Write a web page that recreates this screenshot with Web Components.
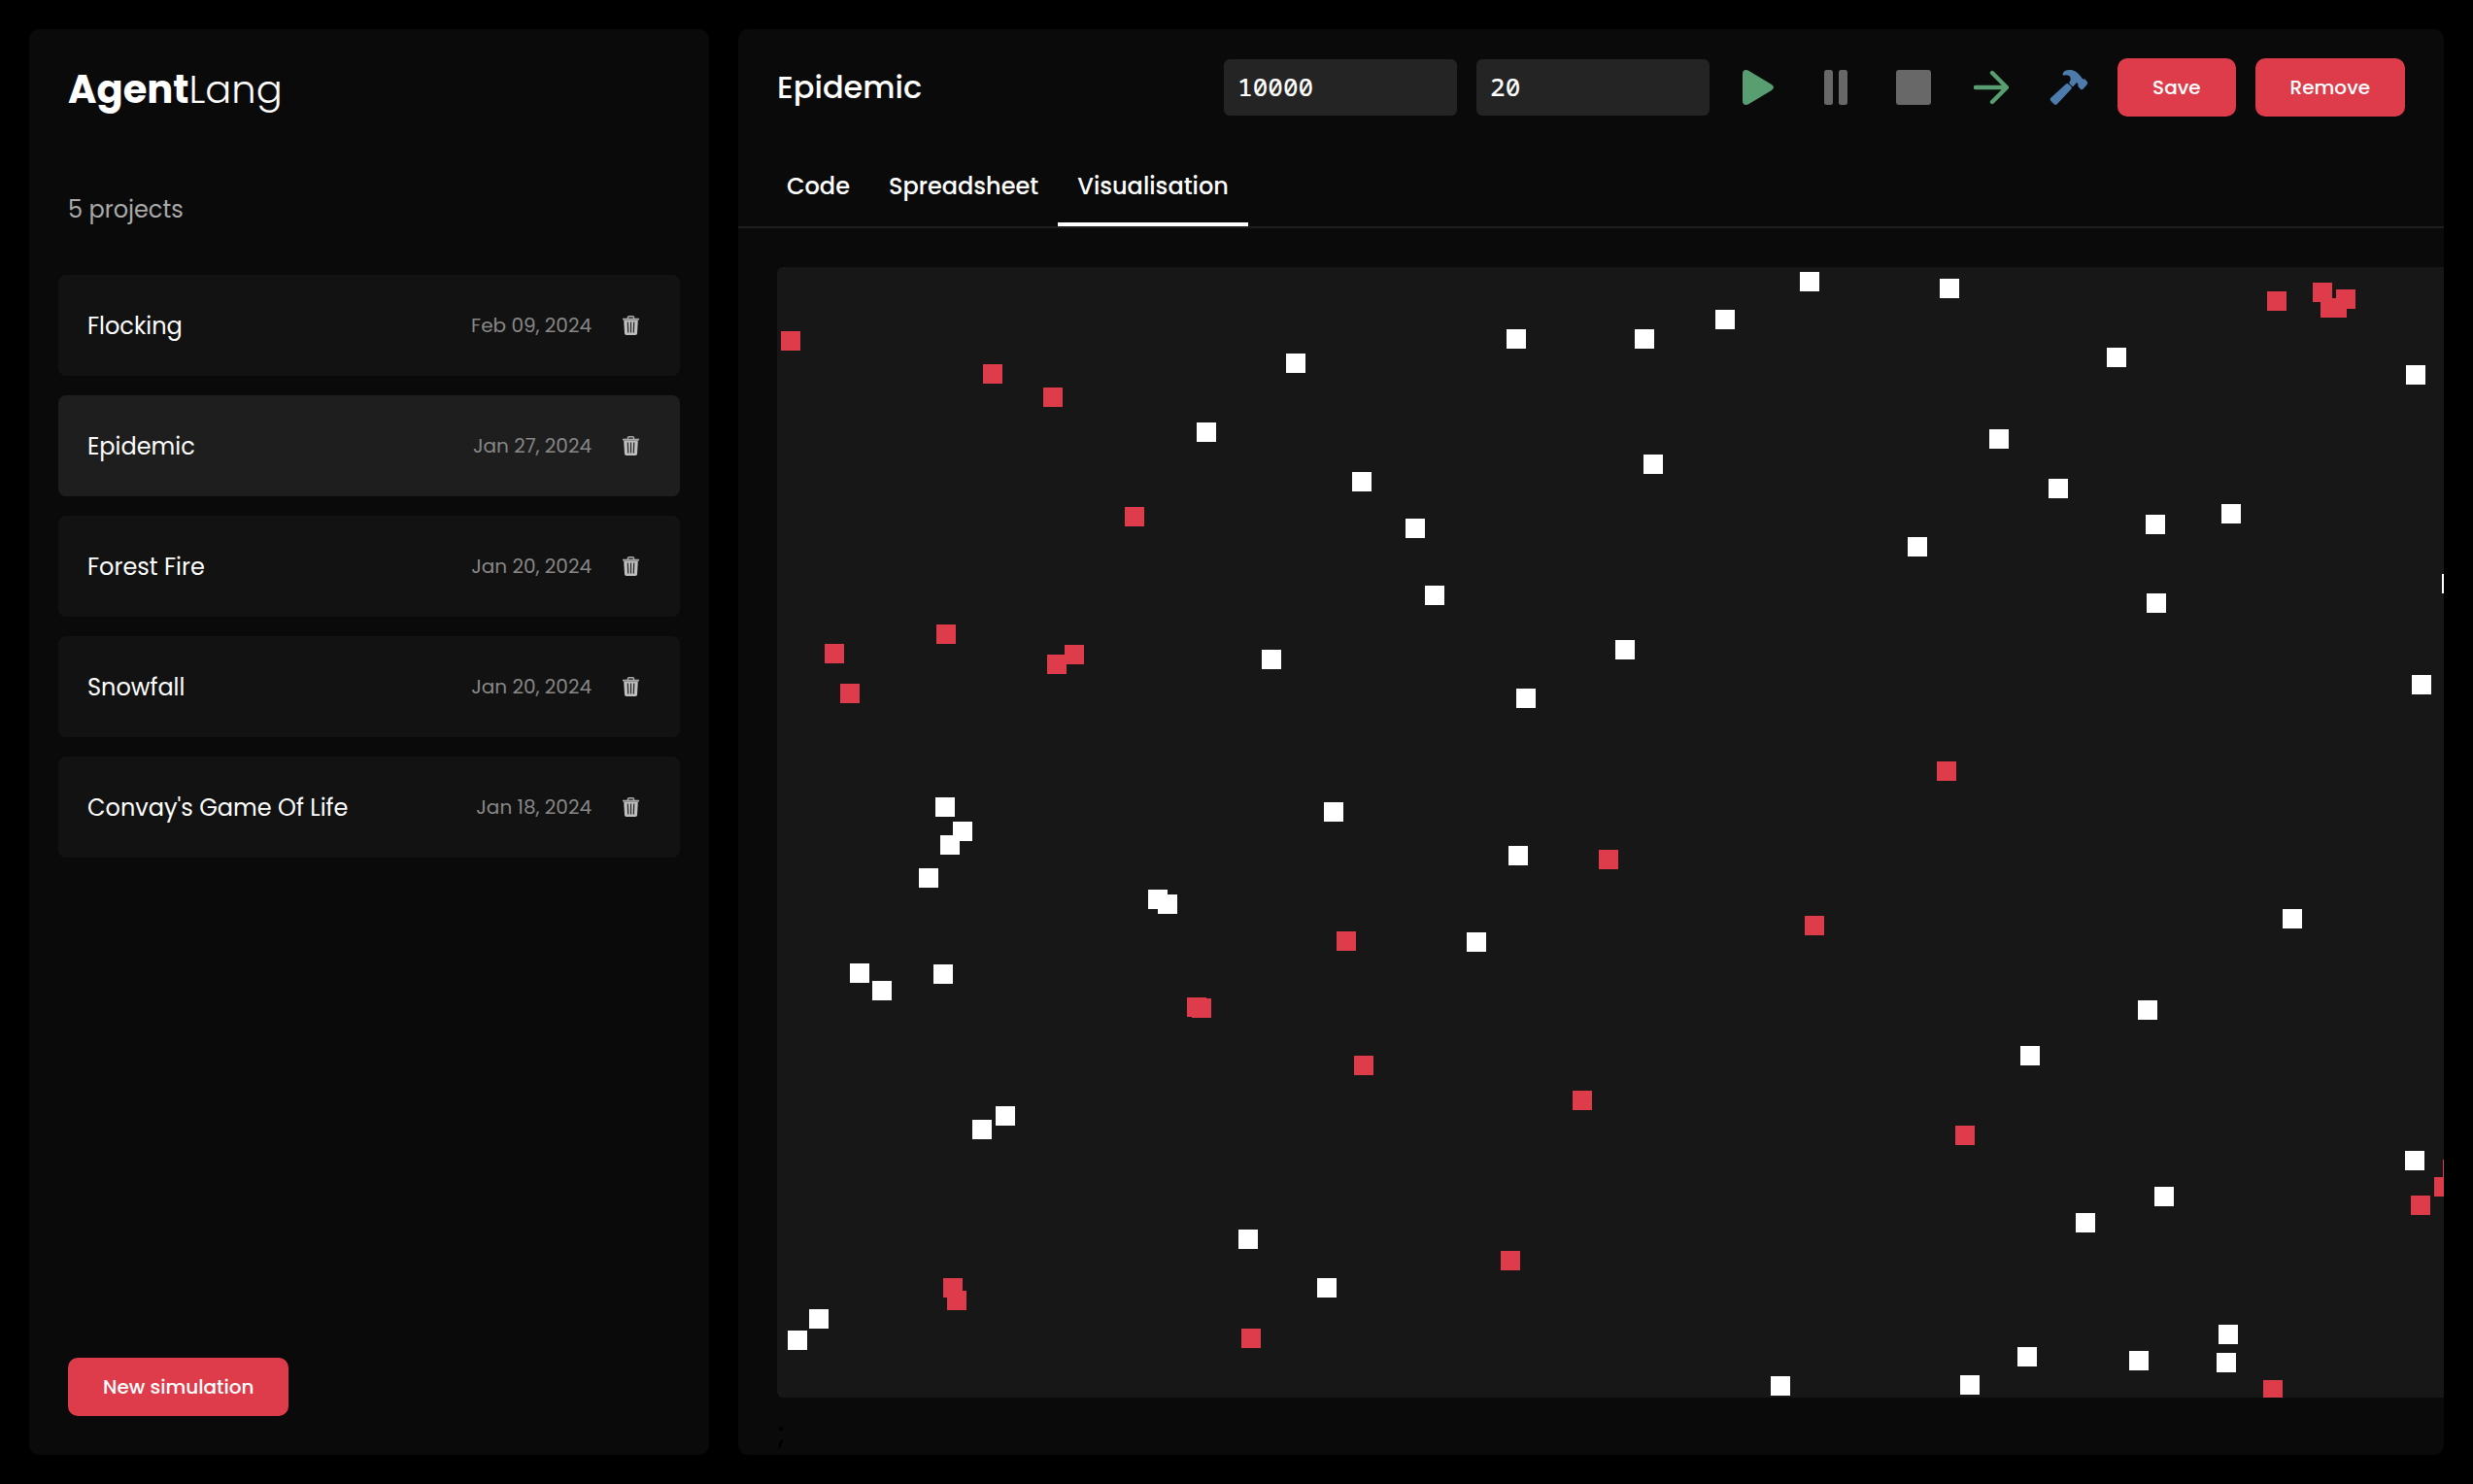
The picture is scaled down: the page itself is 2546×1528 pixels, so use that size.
<!DOCTYPE html>
<html lang="en">
<head>
<meta charset="utf-8">
<title>AgentLang</title>
<style>
  :root {
    --panel: #0a0a0a;
    --row: #121212;
    --row-active: #1e1e1e;
    --field: #242424;
    --stage: #171717;
    --line: #1e1e1e;
    --red: #de3c4b;
    --green: #589e70;
    --blue: #4d7cac;
    --grey: #686868;
    --mono: "Noto Sans Mono", "DejaVu Sans Mono", monospace;
  }
  body {
    margin: 0;
    background: #000;
    color: #fff;
    font-family: Poppins, Inter, "Open Sans", sans-serif;
  }
</style>
</head>
<body>
<agent-app></agent-app>

<script>
const define = (name, html, init) => {
  const template = document.createElement('template');
  template.innerHTML = html;
  customElements.define(name, class extends HTMLElement {
    constructor() {
      super();
      this.attachShadow({ mode: 'open' }).append(template.content.cloneNode(true));
    }
    connectedCallback() {
      if (init) init.call(this, this.shadowRoot);
    }
  });
};

const RESET = `
  :host, *, *::before, *::after { box-sizing: border-box; }
  button, input { font: inherit; color: inherit; border: 0; margin: 0; }
  button { background: none; padding: 0; cursor: pointer; }
`;

/* Filled text button */
define('al-button', `
  <style>${RESET}
    :host { display: block; }
    button {
      display: block; height: 60px; padding: 0 36px; border-radius: 10px;
      background: var(--red); font-size: 20px; font-weight: 500; line-height: 60px; white-space: nowrap;
    }
  </style>
  <button type="button"><slot></slot></button>
`);

/* Icon-only toolbar button */
define('al-tool', `
  <style>${RESET}
    :host { display: block; }
    button { display: flex; align-items: center; justify-content: center; width: 60px; height: 60px; }
  </style>
  <button type="button"><slot></slot></button>
`, function (root) {
  root.querySelector('button').setAttribute('aria-label', this.getAttribute('label'));
});

/* Numeric field */
define('al-field', `
  <style>${RESET}
    :host { display: block; width: 240px; }
    input {
      display: block; width: 100%; height: 58px; padding: 0 14px 2px; border-radius: 6px;
      background: var(--field); font: 500 26px/56px var(--mono); outline: none;
    }
  </style>
  <input type="text" inputmode="numeric">
`, function (root) {
  const input = root.querySelector('input');
  input.value = this.getAttribute('value');
  input.setAttribute('aria-label', this.getAttribute('label'));
});

/* One project in the sidebar */
define('project-row', `
  <style>${RESET}
    :host {
      display: flex; align-items: center; height: 104px; padding: 0 30px;
      border-radius: 8px; background: var(--row);
    }
    :host([active]) { background: var(--row-active); }
    a { flex: 1; color: inherit; text-decoration: none; font-size: 24px; line-height: 36px; padding-top: 2px; }
    .date { color: #888; font-size: 20px; line-height: 30px; margin-right: 21px; }
    button { display: flex; align-items: center; justify-content: center; width: 40px; height: 40px; }
    svg { display: block; }
  </style>
  <a href="#"><slot></slot></a>
  <span class="date"></span>
  <button type="button" aria-label="Delete project">
    <svg width="20" height="20" viewBox="0 0 20 20">
      <path d="M6.500 3V1.800Q6.500 .8 7.500 .8H11.500Q12.500 .8 12.500 1.800V3" fill="none" stroke="#aaa" stroke-width="1.500"/>
      <path d="M1 2.700H18V4.500H1Z" fill="#aaa"/>
      <path d="M2.200 4.500H16.800L16 18.300Q15.900 20 14.200 20H4.800Q3.100 20 3 18.300Z" fill="#bebebe"/>
      <path d="M6.300 6.500L6.700 17.500M9.500 6.500V17.500M12.700 6.500L12.300 17.500" stroke="#222" stroke-width="1.200"/>
    </svg>
  </button>
`, function (root) {
  root.querySelector('.date').textContent = this.getAttribute('date');
});

define('side-panel', `
  <style>${RESET}
    :host {
      display: flex; flex-direction: column; flex: 0 0 700px;
      padding: 32px 30px 40px; border-radius: 10px; background: var(--panel);
    }
    h1 { margin: 0 10px; font-size: 40px; font-weight: 700; line-height: 60px; }
    h1 span { font-weight: 300; }
    p { margin: 74px 10px 47px; color: #aaa; font-size: 24px; line-height: 40px; }
    nav { display: flex; flex-direction: column; gap: 20px; }
    footer { display: flex; margin: auto 10px 0; }
  </style>
  <h1>Agent<span>Lang</span></h1>
  <p>5 projects</p>
  <nav>
    <project-row date="Feb 09, 2024">Flocking</project-row>
    <project-row date="Jan 27, 2024" active>Epidemic</project-row>
    <project-row date="Jan 20, 2024">Forest Fire</project-row>
    <project-row date="Jan 20, 2024">Snowfall</project-row>
    <project-row date="Jan 18, 2024">Convay's Game Of Life</project-row>
  </nav>
  <footer><al-button>New simulation</al-button></footer>
`);

define('tool-bar', `
  <style>${RESET}
    :host { display: flex; align-items: center; gap: 20px; padding: 30px 40px; }
    h2 { flex: 1; margin: 0; font-size: 32px; font-weight: 500; line-height: 60px; }
    svg { display: block; }
  </style>
  <h2>Epidemic</h2>
  <al-field label="Steps" value="10000"></al-field>
  <al-field label="Delay" value="20"></al-field>
  <al-tool label="Play">
    <svg width="32" height="36" viewBox="0 0 32 36"><path d="M0 4Q0 0 3.500 0Q5 0 7 1.200L29.500 14.800Q32 16.400 32 18Q32 19.600 29.500 21.200L7 34.800Q5 36 3.500 36Q0 36 0 32Z" fill="var(--green)"/></svg>
  </al-tool>
  <al-tool label="Pause">
    <svg width="24" height="36" viewBox="0 0 24 36" fill="var(--grey)"><rect width="9" height="36" rx="2.500"/><rect x="15" width="9" height="36" rx="2.500"/></svg>
  </al-tool>
  <al-tool label="Stop">
    <svg width="36" height="36" viewBox="0 0 36 36" fill="var(--grey)"><rect width="36" height="36" rx="3"/></svg>
  </al-tool>
  <al-tool label="Step">
    <svg width="36" height="36" viewBox="0 0 36 36" fill="none" stroke="var(--green)" stroke-width="4.400" stroke-linecap="round"><path d="M2 18H33M19 3L34 18L19 33"/></svg>
  </al-tool>
  <al-tool label="Build">
    <svg width="40" height="36" viewBox="60 36 120 108" fill="var(--blue)">
      <path d="M101 47C104 39 112 36 122 36C137 36 146 42 158 58Q160 62 163 64Q166 66 169 64L176 72Q180 77 176 81L165 94Q160 99 156 95L150 89Q147 86 148 82Q149 77 145 76Q141 76 139 81L134 86Q131 88 128 85L122 79Q119 76 122 73C127 67 126 57 119 53Q112 50 104 53Q99 52 101 47Z"/>
      <path d="M110 80Q115 76 119 80L127 87Q130 91 127 95L84 141Q79 146 74 142L64 132Q60 127 64 122Z"/>
    </svg>
  </al-tool>
  <al-button>Save</al-button>
  <al-button>Remove</al-button>
`);

define('tab-bar', `
  <style>${RESET}
    :host { display: flex; padding: 0 30px; border-bottom: 2px solid var(--line); }
    button { height: 83px; padding: 0 20px; border-bottom: 4px solid transparent; border-top: 4px solid transparent; font-size: 24px; font-weight: 500; }
    button[aria-selected="true"] { border-bottom-color: #fff; }
  </style>
  <button type="button" role="tab">Code</button>
  <button type="button" role="tab">Spreadsheet</button>
  <button type="button" role="tab" aria-selected="true">Visualisation</button>
`, function () { this.setAttribute('role', 'tablist'); });

/* Agent centres on the stage */
const HEALTHY = [
  [534,99],[761,74],[442,170],[602,221],[657,269],[677,338],[509,404],[771,444],[173,556],[573,561],[191,581],
  [1063,15],[1207,22],[976,54],[893,74],[1379,93],[1687,111],[1258,177],[902,203],[1319,228],[1419,265],[1497,254],
  [1174,288],[1420,346],[873,394],[1693,430],[1724,326],
  [178,595],[156,629],[392,651],[402,656],[85,727],[108,745],[171,728],[763,606],[720,695],[235,874],[211,888],
  [485,1001],[566,1051],[43,1083],[21,1105],
  [1560,671],[1411,765],[1290,812],[1686,920],[1428,957],[1347,984],[1494,1099],[1492,1128],[1287,1122],[1402,1126],
  [1033,1152],[1228,1151]
];
const INFECTED = [
  [14,76],[222,110],[284,134],[368,257],[174,378],[59,398],[75,439],[288,409],[306,399],
  [1544,35],[1591,26],[1615,33],[1599,42],[1606,42],[1204,519],
  [856,610],[586,694],[432,762],[437,763],[604,822],[829,858],[755,1023],[181,1051],[185,1064],[488,1103],
  [1068,678],[1223,894],[1692,966],[1716,947],[1725,929],[1540,1156]
];

define('sim-stage', `
  <style>
    :host { display: block; width: 1800px; border-radius: 6px; overflow: hidden; background: var(--stage); }
    svg { display: block; }
  </style>
  <svg width="1800" height="1164" viewBox="0 0 1800 1164"></svg>
`, function (root) {
  const svg = root.querySelector('svg');
  const draw = (list, fill) => list.forEach(([x, y]) => {
    const r = document.createElementNS('http://www.w3.org/2000/svg', 'rect');
    r.setAttribute('x', x - 10);
    r.setAttribute('y', y - 10);
    r.setAttribute('width', 20);
    r.setAttribute('height', 20);
    r.setAttribute('fill', fill);
    svg.append(r);
  });
  draw(HEALTHY, '#fff');
  draw(INFECTED, 'var(--red)');
});

define('work-panel', `
  <style>${RESET}
    :host { display: flex; flex-direction: column; flex: 1; min-width: 0; border-radius: 10px; overflow: hidden; background: var(--panel); }
    section { flex: 1; min-height: 0; padding: 40px 40px 0; overflow: hidden; }
    .tail { color: #000; font-size: 32px; line-height: 74px; }
  </style>
  <tool-bar></tool-bar>
  <tab-bar></tab-bar>
  <section>
    <sim-stage></sim-stage>
    <div class="tail">;</div>
  </section>
`);

define('agent-app', `
  <style>
    :host { display: flex; gap: 30px; box-sizing: border-box; height: 100vh; padding: 30px; }
  </style>
  <side-panel></side-panel>
  <work-panel></work-panel>
`);
</script>
</body>
</html>
